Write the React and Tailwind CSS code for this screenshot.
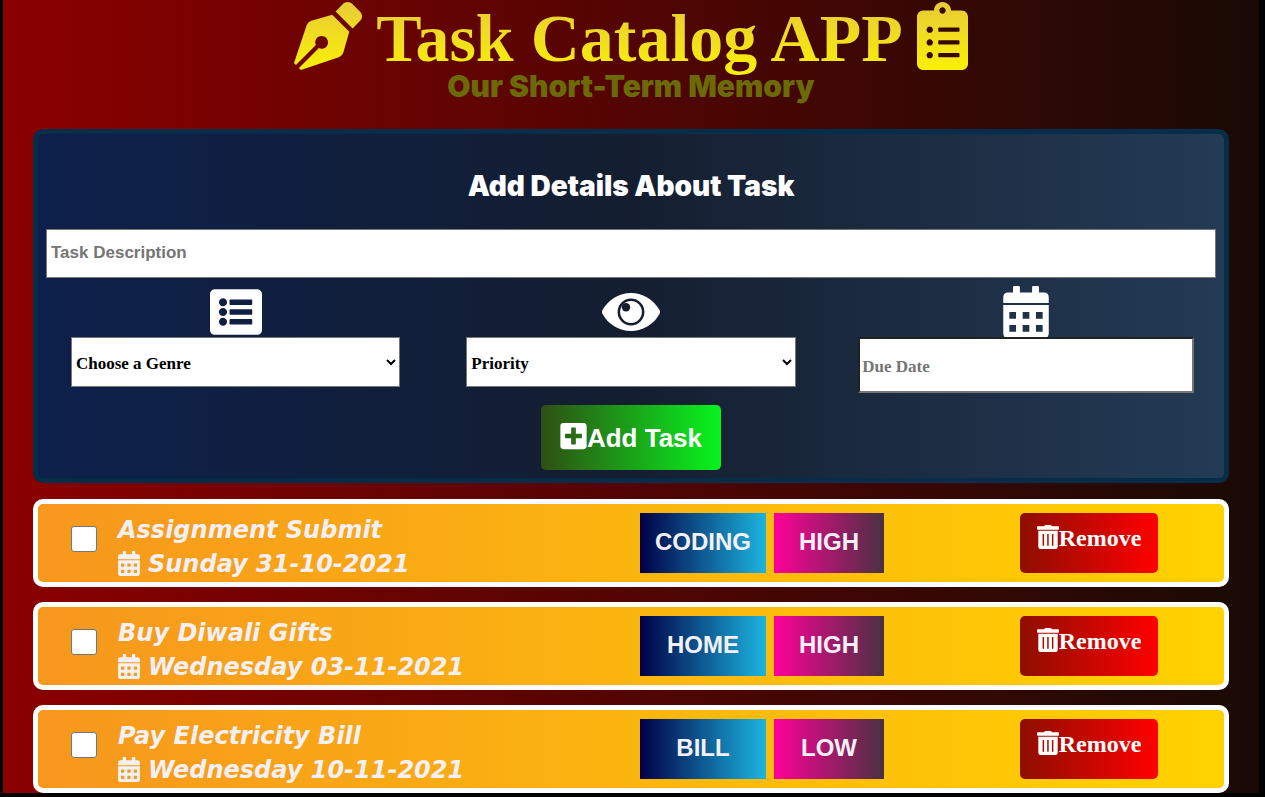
import React from "react";
import {
  FaPenNib,
  FaClipboardList,
  FaListAlt,
  FaPlusSquare,
} from "react-icons/fa";

const TASKS = [
  { id: 1, title: "Assignment Submit", due: "Sunday 31-10-2021", genre: "CODING", priority: "HIGH" },
  { id: 2, title: "Buy Diwali Gifts", due: "Wednesday 03-11-2021", genre: "HOME", priority: "HIGH" },
  { id: 3, title: "Pay Electricity Bill", due: "Wednesday 10-11-2021", genre: "BILL", priority: "LOW" },
];

function EyeIcon({ className }) {
  return (
    <svg viewBox="0 -7 58 52" className={className} fill="currentColor" aria-hidden="true">
      <mask id="highlight">
        <rect x="0" y="0" width="58" height="38" fill="#fff" />
        <circle cx="24" cy="14.2" r="4.2" fill="#000" />
      </mask>
      <path
        fillRule="evenodd"
        d="M.5 17C6 7 17 0 29 0s23 7 28.5 17q1 2 0 4C52 31 41 38 29 38S6 31 .5 21q-1-2 0-4ZM29 5.6a13.4 13.4 0 1 0 0 26.8a13.4 13.4 0 1 0 0-26.8Z"
      />
      <circle cx="29" cy="19" r="10.9" mask="url(#highlight)" />
    </svg>
  );
}

function CalendarIcon({ className }) {
  return (
    <svg viewBox="0 0 448 512" className={className} fill="currentColor" aria-hidden="true">
      <path d="M0 168v-56q0-48 48-48h48V12q0-12 12-12h44q12 0 12 12v52h120V12q0-12 12-12h44q12 0 12 12v52h48q48 0 48 48v56Z" />
      <path
        fillRule="evenodd"
        d="M0 188h448v276q0 48-48 48H48q-48 0-48-48ZM60 256v66h66v-66ZM191 256v66h66v-66ZM322 256v66h66v-66ZM60 384v66h66v-66ZM191 384v66h66v-66ZM322 384v66h66v-66Z"
      />
    </svg>
  );
}

function TrashIcon({ className }) {
  return (
    <svg viewBox="0 0 22 24" className={className} fill="currentColor" aria-hidden="true">
      <path d="M.8 1.3h6.2l.6-.9q.3-.4.8-.4h5.2q.5 0 .8.4l.6.9h6.2q.8 0 .8.8v1.9q0 .7-.8.7H.8Q0 4.700 0 4V2.100q0-.8.8-.8Z" />
      <path
        fillRule="evenodd"
        d="M1.300 5.800h19.400v16q0 2.200-2.200 2.200h-15q-2.200 0-2.200-2.200ZM5.600 9v11.800h1.500V9ZM10.200 9v11.800h1.500V9ZM14.900 9v11.800h1.500V9Z"
      />
    </svg>
  );
}

function Header() {
  return (
    <header className="text-center">
      <svg className="absolute size-0" aria-hidden="true">
        <linearGradient id="gold" x1="0" y1="0" x2="0" y2="512" gradientUnits="userSpaceOnUse">
          <stop offset="0" stopColor="#e8cb37" />
          <stop offset="1" stopColor="#f9f007" />
        </linearGradient>
      </svg>
      <div className="flex items-start justify-center gap-3.5">
        <FaPenNib className="mt-0.5 h-[68px] w-[68px]" fill="url(#gold)" aria-hidden="true" />
        <h1 className="bg-linear-to-b/srgb from-[#e8cb37] to-[#f9f007] bg-clip-text font-['Liberation_Serif',serif] text-[68px] leading-[76px] font-bold text-transparent">
          Task Catalog APP
        </h1>
        <FaClipboardList className="mt-0.5 h-[68px] w-[51px]" fill="url(#gold)" aria-hidden="true" />
      </div>
      <p className="font-['Inter',sans-serif] text-[30px] leading-5 font-black text-[#6b6a06]">
        Our Short-Term Memory
      </p>
    </header>
  );
}

function TaskForm() {
  return (
    <form
      className="mt-[33px] rounded-[10px] border-[5px] border-[#032d49] bg-linear-to-r/srgb from-[#0d204b] via-[#141e30] to-[#243b55] pb-2"
      onSubmit={(e) => e.preventDefault()}
    >
      <h2 className="pt-9 text-center font-['Inter',sans-serif] text-[28px] leading-8 font-black text-white">
        Add Details About Task
      </h2>
      <div className="mt-[27px] px-2">
        <input
          type="text"
          aria-label="Task Description"
          placeholder="Task Description"
          className="block h-[49px] w-full border border-[#767676] bg-white px-1 pb-0.5 font-['Liberation_Sans',sans-serif] text-[17px] font-bold text-black placeholder:text-[#757575]"
        />
      </div>
      <div className="mt-2 grid grid-cols-3 font-['Liberation_Serif',serif] text-[17px] font-bold">
        <div className="flex flex-col items-center">
          <FaListAlt className="-mb-px h-[52px] w-[52px] text-white" aria-hidden="true" />
          <select
            aria-label="Genre"
            className="h-[50px] w-5/6 border border-[#767676] bg-white pt-0.5 text-black"
          >
            <option>Choose a Genre</option>
            <option>Coding</option>
            <option>Home</option>
            <option>Bill</option>
          </select>
        </div>
        <div className="flex flex-col items-center">
          <EyeIcon className="-mb-px h-[52px] w-[58px] text-white" />
          <select
            aria-label="Priority"
            className="h-[50px] w-5/6 border border-[#767676] bg-white pt-0.5 text-black"
          >
            <option>Priority</option>
            <option>High</option>
            <option>Low</option>
          </select>
        </div>
        <div className="flex flex-col items-center">
          <CalendarIcon className="-mb-px h-[52px] w-[46px] text-white" />
          <input
            type="text"
            aria-label="Due Date"
            placeholder="Due Date"
            className="h-14 w-[85%] border-2 border-t-[#212121] border-r-[#767676] border-b-[#767676] border-l-[#212121] bg-white px-0.5 pt-1 text-black placeholder:text-[#757575]"
          />
        </div>
      </div>
      <div className="mt-3 flex justify-center">
        <button
          type="submit"
          className="flex h-[65px] items-center rounded-[5px] bg-linear-to-r/srgb from-[#2f4f14] to-[#07f41f] px-[19px] pt-0.5 font-['Liberation_Sans',sans-serif] text-[26px] font-bold text-white"
        >
          <FaPlusSquare className="mb-1.5 h-[30px] w-[27px]" aria-hidden="true" />
          Add Task
        </button>
      </div>
    </form>
  );
}

function TaskCard({ task }) {
  return (
    <li className="grid h-[88px] grid-cols-[80fr_522fr_380fr_204fr] rounded-[10px] border-[5px] border-white bg-linear-to-r/srgb from-[#f7971e] to-[#ffd200]">
      <div className="flex justify-center pt-[22px]">
        <input
          type="checkbox"
          aria-label={"Mark " + task.title + " as done"}
          className="mr-[-11px] size-[26px] appearance-none rounded-[3px] border border-[#767676] bg-white checked:bg-[#0075ff]"
        />
      </div>
      <div className="pt-[9px] font-['DejaVu_Sans',sans-serif] text-2xl leading-[34px] font-bold whitespace-nowrap text-[#f5f0f5] italic">
        <h3>{task.title}</h3>
        <p className="flex items-center gap-2">
          <CalendarIcon className="mb-0.5 h-[25px] w-[22px]" />
          {task.due}
        </p>
      </div>
      <div className="flex gap-2 pt-[9px] font-['Liberation_Sans',sans-serif] text-2xl font-bold text-[#f5f0f5]">
        <span className="flex h-[60px] w-[126px] items-center justify-center bg-linear-to-r/srgb from-[#000046] to-[#1cb5e0] pb-0.5">
          {task.genre}
        </span>
        <span className="flex h-[60px] w-[110px] items-center justify-center bg-linear-to-r/srgb from-[#ff0099] to-[#493240] pb-0.5">
          {task.priority}
        </span>
      </div>
      <div className="pt-[9px]">
        <button
          type="button"
          className="flex h-[60px] w-[138px] items-start justify-center rounded-[5px] bg-linear-to-r/srgb from-[#8e0e00] to-[#ff0000] pt-3 font-['Liberation_Serif',serif] text-2xl leading-[26px] font-bold text-white"
        >
          <TrashIcon className="h-6 w-[22px]" />
          Remove
        </button>
      </div>
    </li>
  );
}

export default function App() {
  return (
    <div className="min-h-screen bg-black pr-1.5 pb-1 pl-[3px]">
      <main className="bg-linear-to-r/srgb from-[#8b0000] to-[#190a05] px-[30px]">
        <Header />
        <TaskForm />
        <ul className="mt-4 flex flex-col gap-[15px]">
          {TASKS.map((task) => (
            <TaskCard key={task.id} task={task} />
          ))}
        </ul>
      </main>
    </div>
  );
}
